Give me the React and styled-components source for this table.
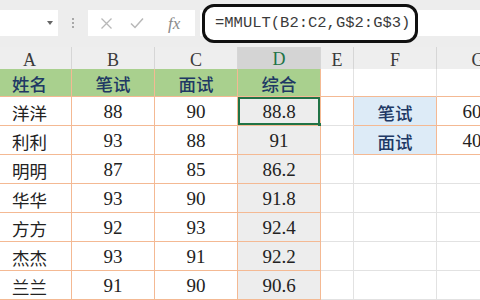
import React from 'react';
import styled, {createGlobalStyle, css} from 'styled-components';

const GlobalStyle = createGlobalStyle`
    html, body {
        margin: 0;
        padding: 0;
        background: #ffffff;
        overflow: hidden;
    }
    body {
        font-family: "Liberation Serif", "Noto Sans CJK SC", serif;
    }
`

const ORANGE = '#f4b993';
const GRID = '#e2e2e2';
const NAVY = '#203864';
const COLS = '72px 83px 83px 83px 33px 83px 83px';

const Sheet = styled.div`
    width: 480px;
    height: 300px;
    display: flex;
    flex-direction: column;
    overflow: hidden;
`

const Toolbar = styled.div`
    height: 47px;
    flex-shrink: 0;
    background: #ededed;
    display: flex;
    align-items: center;
    padding-bottom: 1px;
    box-sizing: border-box;
`

const NameBox = styled.div`
    width: 58px;
    height: 26px;
    background: #ffffff;
    display: flex;
    align-items: center;
    justify-content: flex-end;
    padding-right: 5px;
    box-sizing: border-box;
`

const Caret = styled.span`
    width: 0;
    height: 0;
    border-left: 3.5px solid transparent;
    border-right: 3.5px solid transparent;
    border-top: 4px solid #666;
`

const Grip = styled.div`
    width: 30px;
    display: flex;
    flex-direction: column;
    align-items: center;
    gap: 2px;

    span {
        width: 2px;
        height: 2px;
        background: #a8a8a8;
    }
`

const ActionBox = styled.div`
    width: 107px;
    height: 26px;
    background: #ffffff;
    display: flex;
    align-items: center;
    padding-left: 12px;
    gap: 17px;
    box-sizing: border-box;
`

const Fx = styled.span`
    font-family: "Liberation Serif", serif;
    font-style: italic;
    font-size: 17px;
    color: #8a8a8a;
    margin-left: 7px;
    line-height: 1;
`

const FormulaField = styled.div`
    flex: 1;
    height: 26px;
    margin-left: 5px;
    background: #ffffff;
    display: flex;
    align-items: center;
`

const Highlight = styled.div`
    width: 216px;
    height: 39px;
    margin-left: 2px;
    box-sizing: border-box;
    border: 3px solid #111111;
    border-radius: 12px;
    background: #ffffff;
    display: flex;
    align-items: center;
    padding-left: 10px;
    font-family: "Liberation Mono", monospace;
    font-size: 15.5px;
    color: #3a3a3a;
    white-space: nowrap;
`

const Row = styled.div`
    display: grid;
    grid-template-columns: ${COLS};
    height: ${props => props.$h}px;
    flex-shrink: 0;
`

const HeadCell = styled.div`
    display: flex;
    align-items: center;
    justify-content: center;
    box-sizing: border-box;
    font-family: "Liberation Serif", serif;
    font-size: 18px;
    padding-top: 2px;
    background: ${props => props.$active ? '#d4d4d4' : '#eeeeee'};
    color: ${props => props.$active ? '#217346' : '#3a3a3a'};
    border-right: 1px solid #d6d6d6;
    border-bottom: ${props => props.$active ? '2px solid #217346' : '1px solid #d6d6d6'};
    padding-right: ${props => props.$shift ? 12 : 0}px;
`

const Cell = styled.div`
    position: relative;
    display: flex;
    align-items: center;
    justify-content: center;
    box-sizing: border-box;
    padding-top: 2px;
    padding-right: ${props => props.$shift ? 12 : 0}px;
    background: ${props => props.$fill || '#ffffff'};
    border-right: 1px solid ${props => props.$right || GRID};
    border-bottom: 1px solid ${props => props.$bottom || GRID};
    font-family: "Liberation Serif", "Noto Sans CJK SC", serif;
    font-size: 19px;
    color: #222222;

    ${props => props.$cjk && css`
        font-family: "Noto Sans CJK SC", sans-serif;
        font-size: 17.5px;
    `}

    ${props => props.$label && css`
        font-family: "Noto Sans CJK SC", sans-serif;
        font-size: 17.5px;
        font-weight: 500;
        color: ${NAVY};
    `}

    ${props => props.$selected && css`
        box-shadow: inset 0 0 0 2px #217346;

        &::after {
            content: '';
            position: absolute;
            right: -2px;
            bottom: -2px;
            width: 4px;
            height: 4px;
            background: #217346;
        }
    `}
`

const XIcon = () => (
    <svg width="13" height="13" viewBox="0 0 13 13">
        <path d="M1.5 1.5 L11.5 11.5 M11.5 1.5 L1.5 11.5" stroke="#b8b8b8" strokeWidth="1.3" fill="none" />
    </svg>
)

const CheckIcon = () => (
    <svg width="14" height="12" viewBox="0 0 14 12">
        <path d="M1 6.5 L5 10.5 L13 1.5" stroke="#b8b8b8" strokeWidth="1.5" fill="none" />
    </svg>
)

const letters = ['A', 'B', 'C', 'D', 'E', 'F', 'G'];

const scores = [
    ['洋洋', 88, 90, '88.8'],
    ['利利', 93, 88, '91'],
    ['明明', 87, 85, '86.2'],
    ['华华', 93, 90, '91.8'],
    ['方方', 92, 93, '92.4'],
    ['杰杰', 93, 91, '92.2'],
    ['兰兰', 91, 90, '90.6'],
];

const weights = [['笔试', 60], ['面试', 40]];

const App = () => {
    return (
        <Sheet>
            <GlobalStyle />
            <Toolbar>
                <NameBox><Caret /></NameBox>
                <Grip><span /><span /><span /></Grip>
                <ActionBox>
                    <XIcon />
                    <CheckIcon />
                    <Fx>fx</Fx>
                </ActionBox>
                <FormulaField>
                    <Highlight>=MMULT(B2:C2,G$2:G$3)</Highlight>
                </FormulaField>
            </Toolbar>

            <Row $h={22}>
                {letters.map((l, i) => (
                    <HeadCell key={l} $active={l === 'D'} $shift={i === 0}>{l}</HeadCell>
                ))}
            </Row>

            <Row $h={28}>
                {['姓名', '笔试', '面试', '综合'].map((t, i) => (
                    <Cell key={t} $label $fill="#a9d08e" $right={ORANGE} $bottom={ORANGE} $shift={i === 0}>{t}</Cell>
                ))}
                <Cell $right={GRID} $bottom={ORANGE} />
                <Cell $bottom={ORANGE} />
                <Cell $bottom={ORANGE} />
            </Row>

            {scores.map(([name, written, oral, total], r) => {
                const weight = weights[r];
                const tableEdge = r < 2 ? ORANGE : GRID;
                return (
                    <Row key={name} $h={29}>
                        <Cell $cjk $shift $right={ORANGE} $bottom={ORANGE}>{name}</Cell>
                        <Cell $right={ORANGE} $bottom={ORANGE}>{written}</Cell>
                        <Cell $right={ORANGE} $bottom={ORANGE}>{oral}</Cell>
                        <Cell $fill="#ededed" $right={ORANGE} $bottom={ORANGE} $selected={r === 0}>{total}</Cell>
                        <Cell $right={tableEdge} />
                        {weight ? (
                            <>
                                <Cell $label $fill="#ddebf7" $right={ORANGE} $bottom={ORANGE}>{weight[0]}</Cell>
                                <Cell $shift $right={ORANGE} $bottom={ORANGE}>{weight[1]}</Cell>
                            </>
                        ) : (
                            <>
                                <Cell />
                                <Cell />
                            </>
                        )}
                    </Row>
                )
            })}
        </Sheet>
    )
}

export default App;
